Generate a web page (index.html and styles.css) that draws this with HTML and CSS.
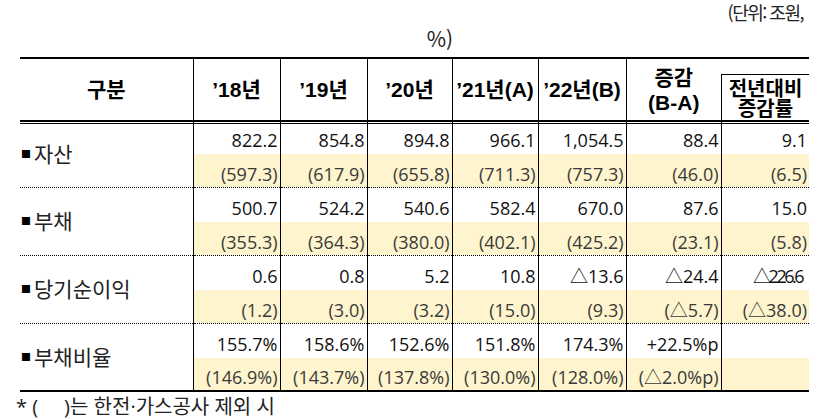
FILE: index.html
```html
<!DOCTYPE html>
<html lang="ko">
<head>
<meta charset="utf-8">
<title>재무 현황</title>
<link rel="stylesheet" href="styles.css">
</head>
<body>
<div class="unit"><span class="unit-line1">(단위: 조원,</span><span class="unit-line2">%)</span></div>
<table class="fin">
  <colgroup>
    <col class="c-label"><col class="c-n1"><col class="c-n2"><col class="c-n3"><col class="c-n4"><col class="c-n5"><col class="c-diff"><col class="c-rate">
  </colgroup>
  <thead>
    <tr>
      <th>구분</th>
      <th>’18년</th>
      <th>’19년</th>
      <th>’20년</th>
      <th>’21년(A)</th>
      <th>’22년(B)</th>
      <th>증감<br>(B-A)</th>
      <th class="h-rate"><div class="rate-box">전년대비<br>증감률</div></th>
    </tr>
  </thead>
  <tbody>
    <tr class="main first">
      <td class="label" rowspan="2"><span class="bullet">■</span>자산</td>
      <td>822.2</td><td>854.8</td><td>894.8</td><td>966.1</td><td>1,054.5</td><td>88.4</td><td>9.1</td>
    </tr>
    <tr class="sub">
      <td>(597.3)</td><td>(617.9)</td><td>(655.8)</td><td>(711.3)</td><td>(757.3)</td><td>(46.0)</td><td>(6.5)</td>
    </tr>
    <tr class="main">
      <td class="label" rowspan="2"><span class="bullet">■</span>부채</td>
      <td>500.7</td><td>524.2</td><td>540.6</td><td>582.4</td><td>670.0</td><td>87.6</td><td>15.0</td>
    </tr>
    <tr class="sub">
      <td>(355.3)</td><td>(364.3)</td><td>(380.0)</td><td>(402.1)</td><td>(425.2)</td><td>(23.1)</td><td>(5.8)</td>
    </tr>
    <tr class="main">
      <td class="label" rowspan="2"><span class="bullet">■</span>당기순이익</td>
      <td>0.6</td><td>0.8</td><td>5.2</td><td>10.8</td><td>△13.6</td><td>△24.4</td><td class="tight">△226.6</td>
    </tr>
    <tr class="sub">
      <td>(1.2)</td><td>(3.0)</td><td>(3.2)</td><td>(15.0)</td><td>(9.3)</td><td>(△5.7)</td><td>(△38.0)</td>
    </tr>
    <tr class="main">
      <td class="label" rowspan="2"><span class="bullet">■</span>부채비율</td>
      <td>155.7%</td><td>158.6%</td><td>152.6%</td><td>151.8%</td><td>174.3%</td><td>+22.5%p</td><td></td>
    </tr>
    <tr class="sub last">
      <td>(146.9%)</td><td>(143.7%)</td><td>(137.8%)</td><td>(130.0%)</td><td>(128.0%)</td><td>(△2.0%p)</td><td></td>
    </tr>
  </tbody>
</table>
<p class="note">* (&nbsp;&nbsp;&nbsp;&nbsp;&nbsp;)는 한전·가스공사 제외 시</p>
</body>
</html>
```

FILE: styles.css
```css
html, body {
  margin: 0;
  padding: 0;
  background: #fff;
}

body {
  width: 818px;
  height: 419px;
  overflow: hidden;
  font-family: "Open Sans", "Noto Sans CJK KR", sans-serif;
  color: #111;
}

.unit {
  height: 57px;
  font-family: "Noto Sans CJK KR", sans-serif;
  color: #222;
}

.unit-line1 {
  display: block;
  text-align: right;
  padding-right: 15px;
  font-size: 18px;
  letter-spacing: -1.5px;
  line-height: 24px;
}

.unit-line2 {
  display: block;
  text-align: center;
  padding-left: 62px;
  font-size: 21px;
  line-height: 24px;
  margin-top: 2px;
}

.fin {
  margin-left: 20px;
  width: 789px;
  border-collapse: collapse;
  table-layout: fixed;
  border-top: 2px solid #000;
  border-bottom: 2px solid #000;
}

.c-label { width: 173px; }
.c-n1 { width: 87px; }
.c-n2 { width: 87px; }
.c-n3 { width: 85px; }
.c-n4 { width: 86px; }
.c-n5 { width: 88px; }
.c-diff { width: 95px; }
.c-rate { width: 88px; }

.fin thead tr {
  height: 61px;
}

.fin th {
  padding: 0;
  font-family: "Liberation Sans", "Noto Sans CJK KR", sans-serif;
  font-weight: bold;
  font-size: 21px;
  line-height: 25px;
  text-align: center;
  vertical-align: middle;
  color: #000;
  border-left: 1px solid #000;
  border-bottom: 2px solid #000;
  white-space: nowrap;
}

.fin th:first-child {
  border-left: none;
}

.fin th.h-rate {
  border-left: none;
  vertical-align: top;
  padding-top: 15px;
}

.rate-box {
  height: 46px;
  box-sizing: border-box;
  border-top: 1px solid #000;
  border-left: 1px solid #000;
  padding-top: 4px;
  font-size: 20px;
  line-height: 20px;
}

.fin td {
  padding: 0 2px 4px 0;
  text-align: right;
  vertical-align: bottom;
  font-size: 18px;
  line-height: 20px;
  border-left: 1px solid #000;
  white-space: nowrap;
}

.fin tr.main {
  height: 35px;
}

.fin tr.main.first {
  height: 33px;
}

.fin tr.main.first td {
  box-shadow: inset 0 1px #fff, inset 0 2px #000;
}

.fin tr.sub {
  height: 33px;
}

.fin tr.sub td {
  background: #fef4cd;
  color: #3a3a3a;
  padding-bottom: 3px;
  border-bottom: 1px dotted #000;
}

.fin tr.sub.last td {
  border-bottom: none;
}

.fin td.label {
  border-left: none;
  border-bottom: 1px dotted #000;
  text-align: left;
  vertical-align: middle;
  padding: 0 0 2px 1px;
  font-family: "Noto Sans CJK KR", sans-serif;
  font-size: 21px;
  line-height: 26px;
  color: #222;
  background: #fff;
}

.bullet {
  display: inline-block;
  font-size: 10px;
  line-height: 10px;
  vertical-align: 4px;
  margin-right: 3px;
  color: #000;
}

.fin td.tight {
  letter-spacing: -2.5px;
  padding-right: 7px;
}

.note {
  margin: 2px 0 0 0;
  padding-left: 16px;
  font-size: 20px;
  line-height: 26px;
  color: #222;
}
```
